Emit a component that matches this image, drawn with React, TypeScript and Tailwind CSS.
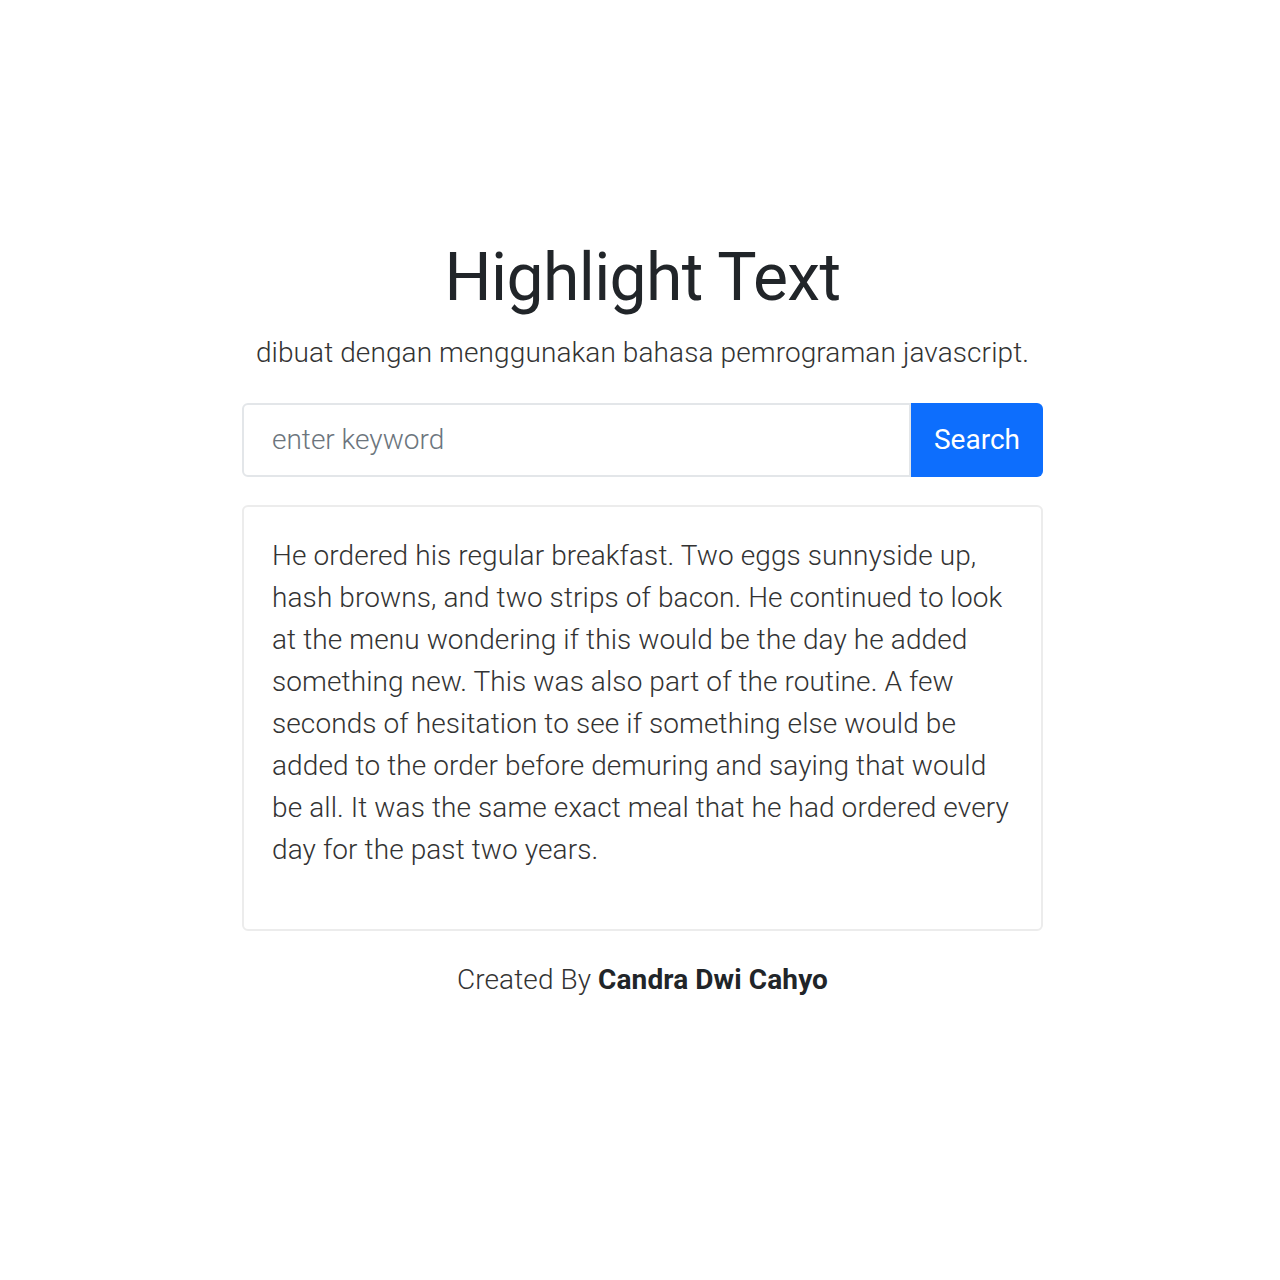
import { useState } from "react"

const STORY =
  "He ordered his regular breakfast. Two eggs sunnyside up, hash browns, and two strips of bacon. He continued to look at the menu wondering if this would be the day he added something new. This was also part of the routine. A few seconds of hesitation to see if something else would be added to the order before demuring and saying that would be all. It was the same exact meal that he had ordered every day for the past two years."

export default function App() {
  const [keyword, setKeyword] = useState("")

  return (
    <div className="min-h-[1280px] bg-white pl-[5px] font-['Roboto',sans-serif] text-[#212529]">
      <div className="mx-auto flex w-[801px] flex-col items-center pt-[238px]">
        <h1 className="text-[66px] font-normal leading-[80px] tracking-[-0.6px]">Highlight Text</h1>

        <p className="mt-[14px] text-[28px] font-light leading-[42px] tracking-[0.1px] text-[#333]">
          dibuat dengan menggunakan bahasa pemrograman javascript.
        </p>

        <div className="mt-[29px] flex h-[74px] w-full">
          <input
            value={keyword}
            onChange={(e) => setKeyword(e.target.value)}
            placeholder="enter keyword"
            className="min-w-0 flex-1 rounded-l-[6px] border-2 border-[#e3e6e9] px-[28px] text-[28px] font-light text-[#212529] outline-none placeholder:text-[#6c757d]"
          />
          <button className="w-[132px] rounded-r-[6px] bg-[#0d6efd] text-[28px] font-normal text-white">
            Search
          </button>
        </div>

        <div className="mt-[28px] w-full rounded-[6px] border-2 border-[#ececec] px-[28px] pt-[28px] pb-[58px]">
          <p className="text-[28px] font-light leading-[42px] tracking-[0.1px] text-[#333]">{STORY}</p>
        </div>

        <p className="mt-[28px] text-[28px] font-light leading-[42px] tracking-[0.1px] text-[#333]">
          Created By <span className="font-bold text-[#212529]">Candra Dwi Cahyo</span>
        </p>
      </div>
    </div>
  )
}
